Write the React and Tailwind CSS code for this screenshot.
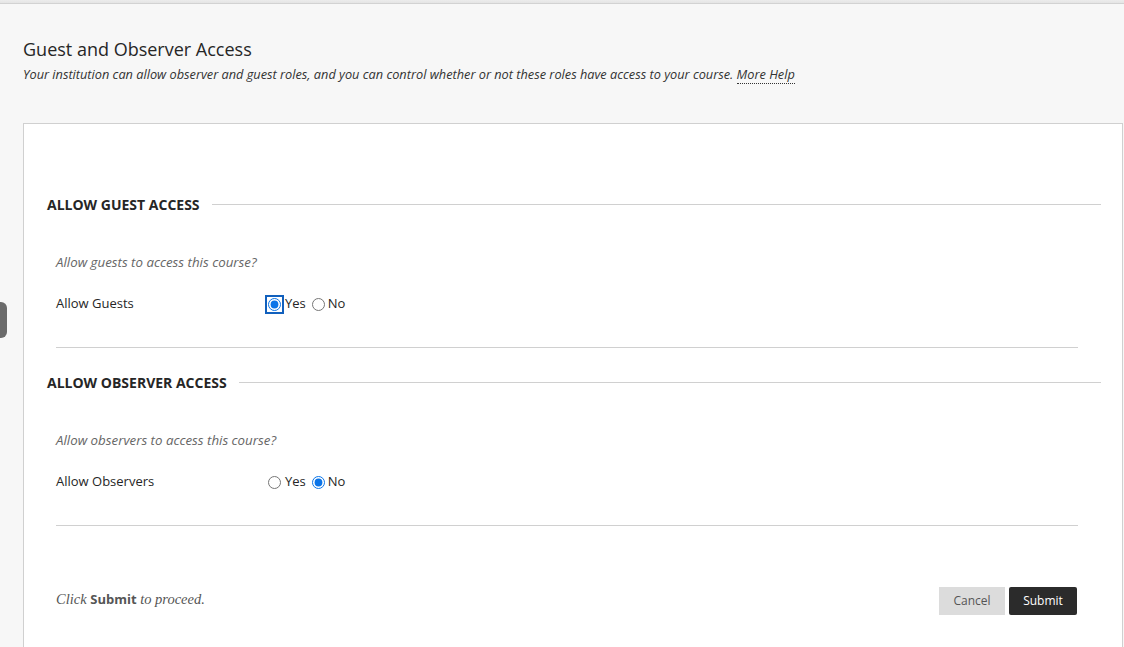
import { useState } from 'react'

// Guest / observer access settings page
function SectionHeader({ children }) {
  return (
    <div className="flex items-center h-[20px]">
      <h3 className="text-[14px] leading-[20px] mt-[2px] font-bold uppercase text-[#262626]">{children}</h3>
      <div className="flex-1 h-px bg-[#d0d0d0] ml-[12px]" />
    </div>
  )
}

function RadioRow({ label, name, value, onChange, focused }) {
  return (
    <div className="flex items-center h-[20px] mt-[1px] text-[13px] text-[#262626]">
      <div className="w-[208px]">{label}</div>
      <label className="flex items-center">
        <input
          type="radio"
          name={name}
          checked={value === 'yes'}
          onChange={() => onChange('yes')}
          className={
            'm-0 ml-[4px] w-[13px] h-[13px] accent-[#0a74e8] ' +
            (focused ? 'outline-2 outline-solid outline-[#1160bd] outline-offset-[1px]' : '')
          }
        />
        <span className="ml-[4px]">Yes</span>
      </label>
      <label className="flex items-center ml-[6px]">
        <input
          type="radio"
          name={name}
          checked={value === 'no'}
          onChange={() => onChange('no')}
          className="m-0 w-[13px] h-[13px] accent-[#0a74e8]"
        />
        <span className="ml-[3px]">No</span>
      </label>
    </div>
  )
}

export default function App() {
  const [guests, setGuests] = useState('yes')
  const [observers, setObservers] = useState('no')

  return (
    <div className="relative min-h-screen overflow-hidden bg-[#f7f7f7] font-['Open_Sans',sans-serif]">
      <div className="h-[4px] bg-gradient-to-b from-[#ececec] to-[#e4e4e4] border-b border-[#d2d2d2]" />

      {/* side tab handle */}
      <div className="absolute left-0 top-[302px] w-[7px] h-[36px] rounded-r-[6px] bg-[#6b6b6b]" />

      <div className="pl-[23px] pt-[33px]">
        <h1 className="text-[18px] leading-[24px] text-[#262626]">Guest and Observer Access</h1>
        <p className="mt-[4px] text-[12.75px] leading-[18px] italic text-[#333]">
          Your institution can allow observer and guest roles, and you can control whether or not these roles have access to your course.{' '}
          <a href="#" className="border-b border-dotted border-[#333] text-[#333]">More Help</a>
        </p>

        <div className="mt-[40px] w-[1100px] min-h-[600px] bg-white border border-[#d0d0d0] pl-[23px] pr-[21px] pt-[70px]">
          <SectionHeader>Allow Guest Access</SectionHeader>
          <div className="ml-[9px] mr-[23px]">
            <p className="mt-[39px] h-[18px] leading-[18px] text-[13.3px] italic text-[#666]">Allow guests to access this course?</p>
            <div className="mt-[23px]">
              <RadioRow label="Allow Guests" name="guests" value={guests} onChange={setGuests} focused />
            </div>
            <div className="mt-[33px] h-px bg-[#d0d0d0]" />
          </div>

          <div className="mt-[24px]">
            <SectionHeader>Allow Observer Access</SectionHeader>
          </div>
          <div className="ml-[9px] mr-[23px]">
            <p className="mt-[38px] h-[18px] leading-[18px] pt-[1px] text-[13.3px] italic text-[#666]">Allow observers to access this course?</p>
            <div className="mt-[24px]">
              <RadioRow label="Allow Observers" name="observers" value={observers} onChange={setObservers} />
            </div>
            <div className="mt-[33px] h-px bg-[#d0d0d0]" />

            <div className="mt-[61px] flex items-center justify-between">
              <p className="font-['Liberation_Serif',serif] italic text-[14.5px] text-[#555] -mt-[3px]">
                Click <b className="font-['Open_Sans',sans-serif] not-italic font-bold text-[13px]">Submit</b> to proceed.
              </p>
              <div className="flex gap-[4px] mr-[1px]">
                <button className="w-[66px] h-[28px] bg-[#dcdcdc] text-[12px] text-[#555]">Cancel</button>
                <button className="w-[68px] h-[28px] rounded-[2px] bg-[#2b2b2b] text-[12px] text-white">Submit</button>
              </div>
            </div>
          </div>
        </div>
      </div>
    </div>
  )
}
